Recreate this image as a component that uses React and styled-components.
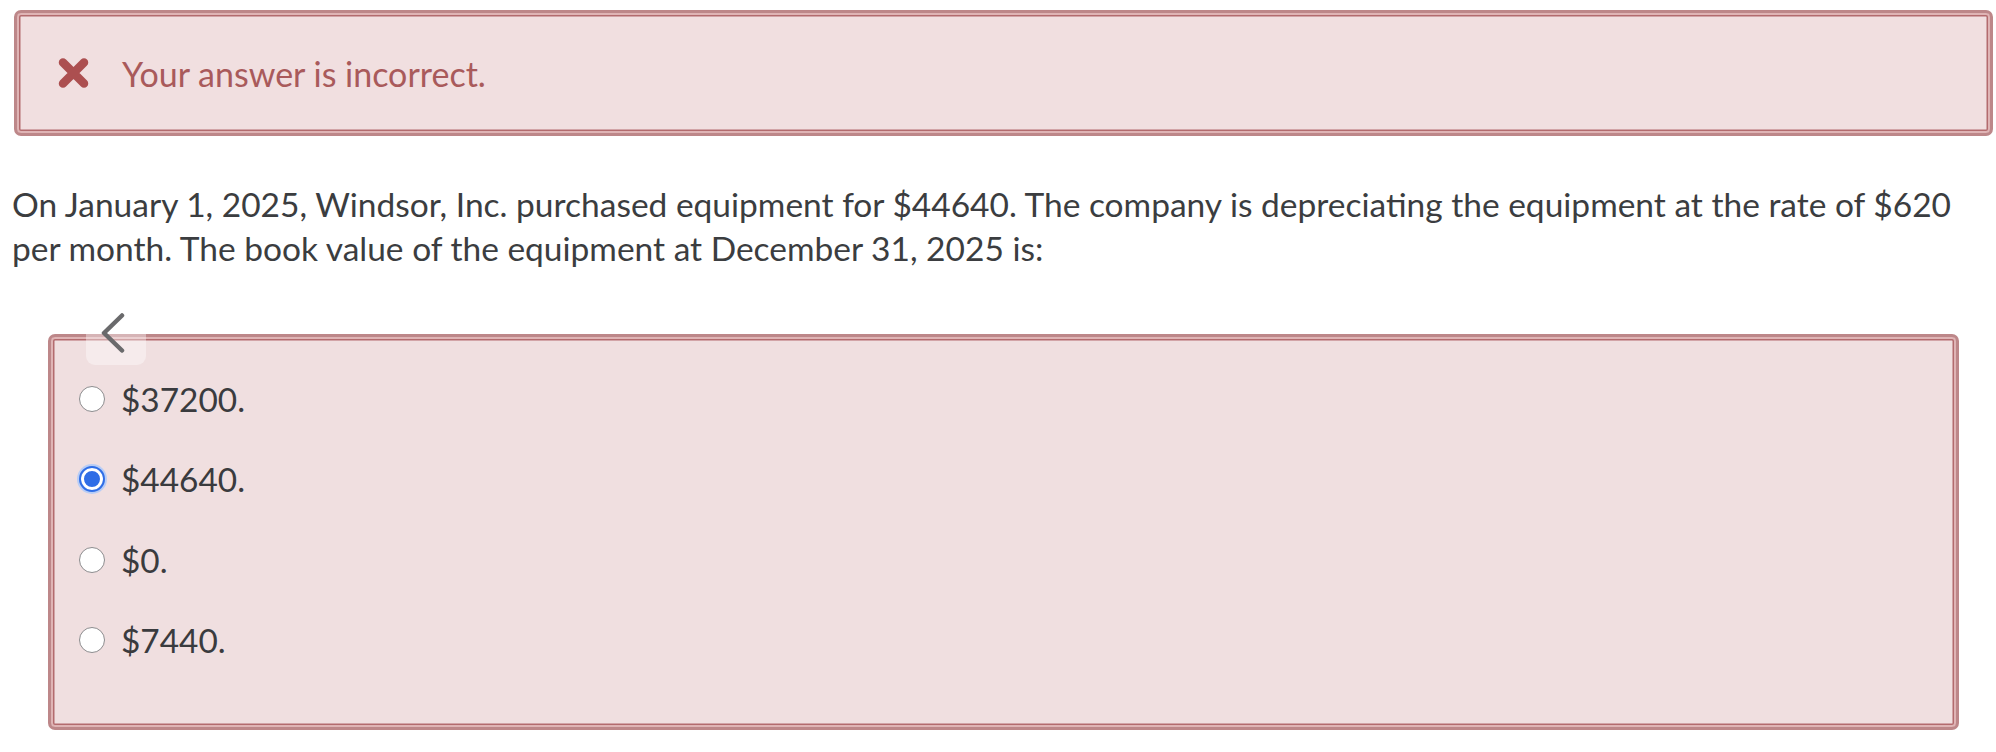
import React from "react";
import styled, { createGlobalStyle } from "styled-components";

const GlobalStyle = createGlobalStyle`
  body {
    margin: 0;
    background: #ffffff;
    font-family: Lato, "Open Sans", sans-serif;
  }
`;

const Page = styled.div`
  width: 1996px;
  height: 752px;
  padding-top: 10px;
  box-sizing: border-box;
  overflow: hidden;
`;

const Feedback = styled.div`
  margin-left: 14px;
  width: 1979px;
  height: 126px;
  box-sizing: border-box;
  display: flex;
  align-items: center;
  gap: 33px;
  padding-left: 41px;
  background: #f1dfe0;
  border: 3px solid #bd8789;
  border-radius: 7px;
  box-shadow: inset 0 0 0 2px #dfb4b5, inset 0 0 0 3.5px #b36b6e;
  color: #a95a5b;
  font-size: 34px;
`;

const Question = styled.p`
  margin: 46px 0 0 12px;
  width: 1975px;
  font-size: 33.5px;
  line-height: 44px;
  color: #3b3d40;
`;

const Answers = styled.div`
  position: relative;
  margin: 64px 0 0 48px;
  width: 1911px;
  height: 396px;
  box-sizing: border-box;
  padding: 22px 28px 0;
  background: #f0dfe0;
  border: 3px solid #bd8789;
  border-radius: 7px;
  box-shadow: inset 0 0 0 2px #dfb4b5, inset 0 0 0 3.5px #b36b6e;
`;

const Option = styled.label`
  display: flex;
  align-items: center;
  gap: 16px;
  height: 80.3px;
  font-size: 33.4px;
  color: #3a3b3e;
`;

const Radio = styled.span`
  width: 26px;
  height: 26px;
  box-sizing: border-box;
  border-radius: 50%;
  flex-shrink: 0;
  background: #ffffff;
  border: ${({ checked }) => (checked ? "2px solid #2f6de6" : "1.5px solid #8c8c8e")};
  box-shadow: ${({ checked }) =>
    checked
      ? "inset 0 0 0 3px #ffffff, inset 0 0 0 12px #2f6de6, 0 0 0 2px #b8cdf6"
      : "none"};
`;

const BackTab = styled.div`
  position: absolute;
  left: 35px;
  top: -31px;
  width: 60px;
  height: 59px;
  border-radius: 9px;
  background: rgba(255, 255, 255, 0.38);
  display: flex;
  align-items: center;
  justify-content: center;
  padding: 0 6px 6px 0;
  box-sizing: border-box;
`;

const options = [
  { label: "$37200.", checked: false },
  { label: "$44640.", checked: true },
  { label: "$0.", checked: false },
  { label: "$7440.", checked: false },
];

const CrossIcon = () => (
  <svg width="31" height="30" viewBox="0 0 31 30">
    <path
      d="M5 4.5 L26 25.5 M26 4.5 L5 25.5"
      stroke="#ac4f50"
      strokeWidth="8.5"
      strokeLinecap="round"
      fill="none"
    />
  </svg>
);

const Chevron = () => (
  <svg width="26" height="40" viewBox="0 0 26 40">
    <path
      d="M22 2.5 L4 20 L22 37.5"
      stroke="#6a6a6c"
      strokeWidth="4.5"
      strokeLinecap="round"
      strokeLinejoin="round"
      fill="none"
    />
  </svg>
);

export default function App() {
  return (
    <Page>
      <GlobalStyle />
      <Feedback>
        <CrossIcon />
        <span>Your answer is incorrect.</span>
      </Feedback>
      <Question>
        On January 1, 2025, Windsor, Inc. purchased equipment for $44640. The company is
        depreciating the equipment at the rate of $620 per month. The book value of the
        equipment at December 31, 2025 is:
      </Question>
      <Answers>
        <BackTab>
          <Chevron />
        </BackTab>
        {options.map((o) => (
          <Option key={o.label}>
            <Radio checked={o.checked} />
            <span>{o.label}</span>
          </Option>
        ))}
      </Answers>
    </Page>
  );
}
